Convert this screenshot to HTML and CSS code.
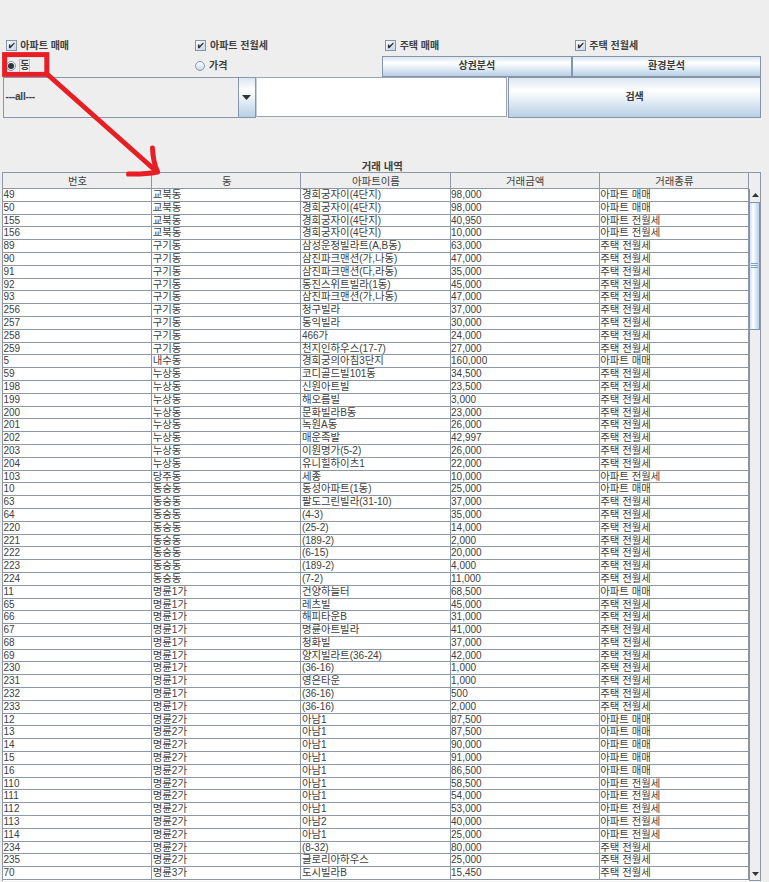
FILE: index.html
```
<!DOCTYPE html>
<html lang="ko">
<head>
<meta charset="utf-8">
<title>거래 내역</title>
<link rel="stylesheet" href="styles.css">
</head>
<body>
<main class="window">
  <div class="options">
    <label class="opt"><svg class="check" viewBox="0 0 11 11"><use href="#tick"/></svg>아파트 매매</label>
    <label class="opt"><svg class="check" viewBox="0 0 11 11"><use href="#tick"/></svg>아파트 전월세</label>
    <label class="opt"><svg class="check" viewBox="0 0 11 11"><use href="#tick"/></svg>주택 매매</label>
    <label class="opt"><svg class="check" viewBox="0 0 11 11"><use href="#tick"/></svg>주택 전월세</label>
  </div>
  <div class="modes">
    <label class="opt"><span class="radio on"></span><span class="focus">동</span></label>
    <label class="opt"><span class="radio"></span>가격</label>
    <button class="btn">상권분석</button>
    <button class="btn">환경분석</button>
  </div>
  <div class="search">
    <div class="combo">
      <span class="combo-text">---all---</span>
      <span class="combo-arrow"><svg width="9" height="5"><path d="M0 0h9L4.5 5z"/></svg></span>
    </div>
    <div class="field"></div>
    <button class="btn">검색</button>
  </div>
  <h1 class="title">거래 내역</h1>
  <div class="pane">
    <div class="row head">
      <span>번호</span><span>동</span><span>아파트이름</span><span>거래금액</span><span>거래종류</span><span class="corner"></span>
    </div>
    <div class="view">
      <div class="rows" id="rows"></div>
      <div class="scroll">
        <span class="arrow"><svg width="7" height="4"><path d="M0 4h7L3.500 0z"/></svg></span>
        <span class="thumb"><i></i><i></i><i></i></span>
        <span class="arrow end"><svg width="7" height="4"><path d="M0 0h7L3.500 4z"/></svg></span>
      </div>
    </div>
  </div>
  <svg class="mark" width="170" height="190" viewBox="0 0 170 190">
    <rect x="4.600" y="54.600" width="42.200" height="19.800"/>
    <path d="M47 74L156 171M152.500 148Q153 162 157.500 171.500M128.500 174Q145 174.500 157.500 172" stroke-linecap="round"/>
  </svg>
</main>
<svg class="defs"><symbol id="tick" viewBox="0 0 11 11"><path d="M2.300 4.300h1.900v1.900L8.200 2.200h1v1.200L4.200 8.800H2.300z" fill="#2b2f36"/></symbol></svg>
<script src="table.js"></script>
</body>
</html>
```
FILE: styles.css
```
* { box-sizing: border-box; }
body {
  margin: 0;
  background: #eee;
  color: #404040;
  font: 10px/12px "Liberation Sans", "Noto Sans CJK KR", sans-serif;
}
.window {
  position: relative;
  width: 769px;
  height: 882px;
  padding: 36px 8px 0 2px;
  overflow: hidden;
}
.defs { display: none; }
.options, .modes {
  display: grid;
  grid-template-columns: repeat(4, 189.700px);
  margin-left: 0.600px;
  font-weight: bold;
}
.options { height: 19.500px; }
.modes { height: 21px; }
.opt {
  display: flex;
  align-items: center;
  gap: 3.500px;
  padding-left: 3.200px;
}
.check {
  width: 11px;
  height: 11px;
  border: 1px solid #8495aa;
  background: linear-gradient(135deg, #fff, #c3d5e8);
}
.radio {
  display: flex;
  align-items: center;
  justify-content: center;
  width: 10px;
  height: 10px;
  border: 1px solid #8796a8;
  border-radius: 50%;
  background: linear-gradient(#fff, #c9dbec);
}
.radio.on::after {
  content: "";
  width: 6px;
  height: 6px;
  border-radius: 50%;
  background: #30343a;
}
.focus { margin-left: 1px; outline: 1px solid #b4c5d9; }
.btn {
  border: 1px solid #8594a7;
  padding: 0;
  color: #383838;
  font: inherit;
  font-weight: bold;
  background: linear-gradient(#dce7f2, #fff 32%, #f7fafd 40%, #b8cfe5);
}
.search {
  display: grid;
  grid-template-columns: 253px 252.500px 253px;
  height: 41px;
  margin-left: 0.600px;
}
.combo {
  display: grid;
  grid-template-columns: 1fr 17px;
  border: 1px solid #8796ab;
}
.combo-text {
  align-self: center;
  padding-left: 2px;
  font-weight: bold;
  letter-spacing: -0.200px;
}
.combo-arrow {
  display: flex;
  align-items: center;
  justify-content: center;
  border-left: 1px solid #8796ab;
  background: linear-gradient(#dce7f2, #fff 32%, #f7fafd 40%, #b8cfe5);
}
svg path { fill: #333; }
.field {
  margin: 0 1px 1px 0;
  border: 1px solid #98a4b3;
  border-left-color: #c3ccd7;
  background: #fff;
}
.title {
  height: 11px;
  margin: 43.500px 0 0 1.500px;
  text-align: center;
  font-size: 10.400px;
  line-height: 11px;
}
.pane {
  border: 1px solid #8d98a6;
  height: 709px;
}
.row {
  display: grid;
  grid-template-columns: repeat(5, 149.200px);
  height: 12.810px;
}
.row span {
  overflow: hidden;
  border-right: 1px solid #8d98a6;
  border-bottom: 1px solid #8d98a6;
  padding-left: 0.500px;
  white-space: nowrap;
  line-height: 12px;
}
.row b {
  font-size: 10.400px;
  font-weight: normal;
}
.row.head {
  grid-template-columns: repeat(5, 149.200px) 1fr;
  height: 16px;
}
.row.head span {
  padding: 0 0 0 1px;
  text-align: center;
  font-size: 10.400px;
  line-height: 17px;
}
.row.head .corner { border: 0; }
.view { display: flex; height: 691px; }
.rows { width: 746px; height: 691.700px; background: #fff; }
.scroll {
  display: flex;
  flex-direction: column;
  flex: 1;
  border-left: 1px solid #7f93ab;
}
.arrow {
  display: flex;
  align-items: center;
  justify-content: center;
  height: 12.500px;
}
.arrow.end { margin-top: auto; }
.thumb {
  display: flex;
  flex-direction: column;
  align-items: center;
  justify-content: center;
  gap: 1px;
  height: 128px;
  border: 1px solid #7894b8;
  border-left: 0;
  background: linear-gradient(90deg, #cfe0f2, #fff 35%, #b9d0e8);
}
.thumb i { width: 7px; height: 1px; background: #7e9fc9; }
.mark {
  position: absolute;
  left: 0;
  top: 0;
}
.mark rect, .mark path {
  fill: none;
  stroke: #e81e25;
  stroke-width: 5px;
}
```
FILE: table.js
```
// Each line: district | deal type | "number;name;price" entries.
const types = { S: '아파트 매매', R: '아파트 전월세', H: '주택 전월세' };
const data = `
교북동|S|49;경희궁자이(4단지);98,000|50;경희궁자이(4단지);98,000
교북동|R|155;경희궁자이(4단지);40,950|156;경희궁자이(4단지);10,000
구기동|H|89;삼성운정빌라트(A,B동);63,000|90;삼진파크맨션(가,나동);47,000|91;삼진파크맨션(다,라동);35,000|92;동진스위트빌라(1동);45,000|93;삼진파크맨션(가,나동);47,000|256;청구빌라;37,000|257;동익빌라;30,000|258;466가;24,000|259;천지인하우스(17-7);27,000
내수동|S|5;경희궁의아침3단지;160,000
누상동|H|59;코디골드빌101동;34,500|198;신원아트빌;23,500|199;해오름빌;3,000|200;문화빌라B동;23,000|201;녹원A동;26,000|202;매운족발;42,997|203;이원명가(5-2);26,000|204;유니힐하이츠1;22,000
당주동|R|103;세종;10,000
동숭동|S|10;동성아파트(1동);25,000
동숭동|H|63;팔도그린빌라(31-10);37,000|64;(4-3);35,000|220;(25-2);14,000|221;(189-2);2,000|222;(6-15);20,000|223;(189-2);4,000|224;(7-2);11,000
명륜1가|S|11;건양하늘터;68,500
명륜1가|H|65;레츠빌;45,000|66;해피타운B;31,000|67;명륜아트빌라;41,000|68;청화빌;37,000|69;양지빌라트(36-24);42,000|230;(36-16);1,000|231;영은타운;1,000|232;(36-16);500|233;(36-16);2,000
명륜2가|S|12;아남1;87,500|13;아남1;87,500|14;아남1;90,000|15;아남1;91,000|16;아남1;86,500
명륜2가|R|110;아남1;58,500|111;아남1;54,000|112;아남1;53,000|113;아남2;40,000|114;아남1;25,000
명륜2가|H|234;(8-32);80,000|235;글로리아하우스;25,000
명륜3가|H|70;도시빌라B;15,450`;

const cell = text => `<span>${text.replace(/[가-힣]+/g, '<b>$&</b>')}</span>`;

document.getElementById('rows').innerHTML = data.trim().split('\n').flatMap(line => {
  const [dong, type, ...items] = line.split('|');
  return items.map(item => {
    const [no, name, price] = item.split(';');
    return `<div class="row">${[no, dong, name, price, types[type]].map(cell).join('')}</div>`;
  });
}).join('');
```
